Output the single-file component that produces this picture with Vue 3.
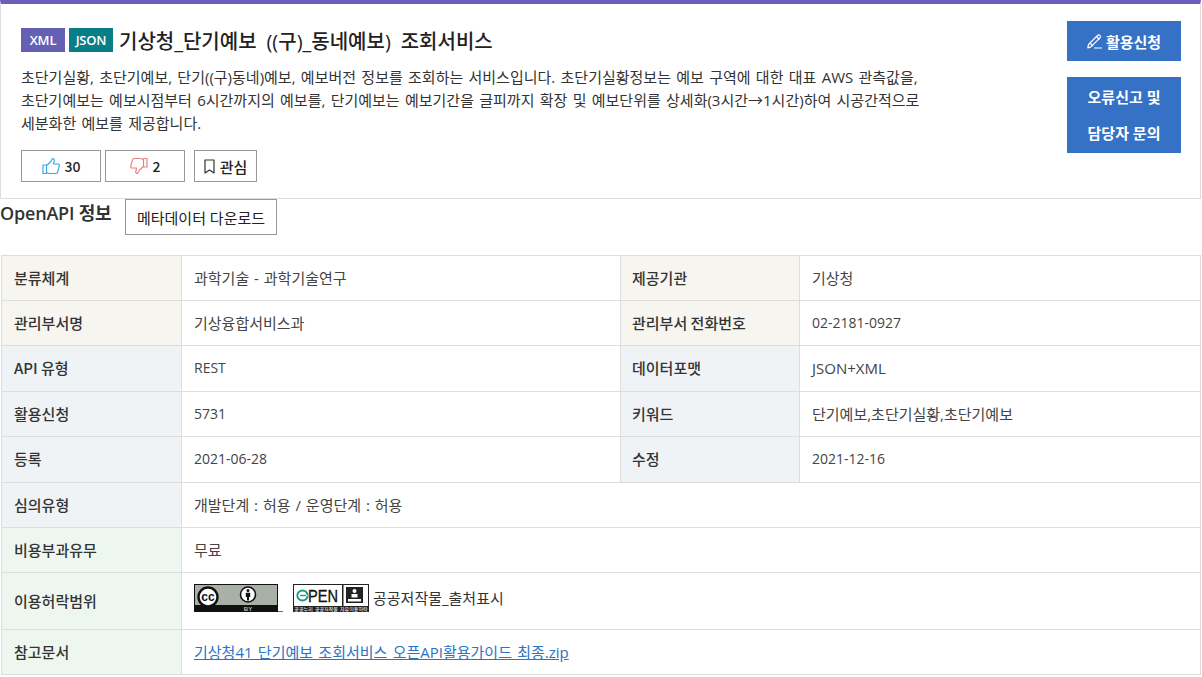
<script setup>
const rows = [
  { tone: 'beige', h: 45, cells: [['분류체계', '과학기술 - 과학기술연구'], ['제공기관', '기상청']] },
  { tone: 'beige', h: 45, cells: [['관리부서명', '기상융합서비스과'], ['관리부서 전화번호', '02-2181-0927', 'latin']] },
  { tone: 'blue', h: 46, cells: [['API 유형', 'REST', 'latin'], ['데이터포맷', 'JSON+XML']] },
  { tone: 'blue', h: 45, cells: [['활용신청', '5731', 'latin'], ['키워드', '단기예보,초단기실황,초단기예보']] },
  { tone: 'blue', h: 46, cells: [['등록', '2021-06-28', 'latin'], ['수정', '2021-12-16', 'latin']] }
]
</script>

<template>
  <div class="page">
    <section class="card">
      <div class="card-main">
        <h1 class="title">
          <span class="tag xml">XML</span>
          <span class="tag json">JSON</span>
          <span>기상청_단기예보 ((구)_동네예보) 조회서비스</span>
        </h1>
        <p class="desc">초단기실황, 초단기예보, 단기((구)동네)예보, 예보버전 정보를 조회하는 서비스입니다. 초단기실황정보는 예보 구역에 대한 대표 AWS 관측값을,<br>초단기예보는 예보시점부터 6시간까지의 예보를, 단기예보는 예보기간을 글피까지 확장 및 예보단위를 상세화(3시간→1시간)하여 시공간적으로<br>세분화한 예보를 제공합니다.</p>
        <div class="actions">
          <button class="act vote">
            <svg width="18" height="18" viewBox="0 0 18 18" fill="none" stroke="#3aa6e8" stroke-width="1.2" stroke-linejoin="round">
              <path d="M1 8h3.500v8.500H1zM4.500 8.500 8.500 5 10.500 1.500c1.400 0 2 1 1.700 2.400L11.400 7h4.700c1 0 1.500 1 1.200 1.800l-1.800 6.600c-.2.700-.7 1.100-1.400 1.100H7.500l-3-1"/>
            </svg>
            <span>30</span>
          </button>
          <button class="act vote">
            <svg width="18" height="18" viewBox="0 0 18 18" fill="none" stroke="#ee8080" stroke-width="1.2" stroke-linejoin="round">
              <path d="M17 10h-3.500V1.500H17zM13.500 9.500 9.500 13 7.500 16.500c-1.400 0-2-1-1.700-2.400L6.600 11H1.900C.9 11 .4 10 .7 9.200L2.500 2.600C2.700 1.900 3.200 1.500 3.900 1.500h6.600l3 1"/>
            </svg>
            <span>2</span>
          </button>
          <button class="act star">
            <svg width="11" height="15" viewBox="0 0 11 15" fill="none" stroke="#333" stroke-width="1.2" stroke-linejoin="round">
              <path d="M1 1h9v13L5.500 11 1 14z"/>
            </svg>
            <span>관심</span>
          </button>
        </div>
      </div>
      <div class="card-side">
        <a class="blue-btn apply">
          <svg width="16" height="16" viewBox="0 0 16 16" fill="none" stroke="#fff" stroke-width="1.2" stroke-linejoin="round">
            <path d="M1.500 11.500 10.500 2.500c.8-.8 1.800-.8 2.500-.1s.7 1.700-.1 2.500L3.900 13.900l-3.100.9zM9.500 3.500l3 3M3 10l3 3M7 15h8"/>
          </svg>
          <span>활용신청</span>
        </a>
        <a class="blue-btn report">오류신고 및<br>담당자 문의</a>
      </div>
    </section>

    <div class="sub">
      <h2 class="sub-title">OpenAPI 정보</h2>
      <button class="meta-btn">메타데이터 다운로드</button>
    </div>

    <table class="info">
      <colgroup>
        <col class="c1"><col class="c2"><col class="c3"><col>
      </colgroup>
      <tbody>
        <tr v-for="row in rows" :key="row.cells[0][0]" :class="row.tone" :style="{ height: row.h + 'px' }">
          <template v-for="cell in row.cells" :key="cell[0]">
            <th>{{ cell[0] }}</th>
            <td :class="cell[2]">{{ cell[1] }}</td>
          </template>
        </tr>
        <tr class="blue r45">
          <th>심의유형</th>
          <td colspan="3">개발단계 : 허용 / 운영단계 : 허용</td>
        </tr>
        <tr class="green r45">
          <th>비용부과유무</th>
          <td colspan="3">무료</td>
        </tr>
        <tr class="green r57">
          <th>이용허락범위</th>
          <td colspan="3">
            <div class="license">
              <svg class="cc" width="84" height="28" viewBox="0 0 84 28" role="img" aria-label="CC BY">
                <rect width="84" height="28" fill="#111"/>
                <rect x="1" y="1" width="82" height="20" fill="#a9b0a6"/>
                <circle cx="14" cy="13" r="9.500" fill="#fff" stroke="#111" stroke-width="2.400"/>
                <text x="14" y="16.800" text-anchor="middle" class="cc-t">cc</text>
                <circle cx="54" cy="10.500" r="7.500" fill="#fff" stroke="#111" stroke-width="1.600"/>
                <circle cx="54" cy="6.500" r="1.500" fill="#111"/>
                <path d="M51.800 8.800h4.400v4.200h-1.200v3.500h-2V13h-1.200z" fill="#111"/>
                <text x="54" y="26.500" text-anchor="middle" class="by-t">BY</text>
              </svg>
              <span class="under"></span>
              <svg class="open" width="76" height="28" viewBox="0 0 76 28" role="img" aria-label="공공누리 OPEN">
                <rect width="76" height="28" fill="#222"/>
                <rect x="1" y="1" width="48" height="21" fill="#fff"/>
                <rect x="50.500" y="1" width="24.500" height="21" fill="#fff"/>
                <circle cx="9.500" cy="11.500" r="5" fill="none" stroke="#149a8e" stroke-width="2.200"/>
                <path d="M5 11.500h9.500" stroke="#fff" stroke-width="1.500"/>
                <path d="M7 11.500h6" stroke="#149a8e" stroke-width="1.400"/>
                <text x="15" y="17.500" class="open-t" textLength="30" lengthAdjust="spacingAndGlyphs">PEN</text>
                <rect x="53" y="3" width="17" height="16" fill="#222"/>
                <circle cx="61.500" cy="7" r="2" fill="#fff"/>
                <path d="M58.500 13.500v-3.500h6v3.500z" fill="#fff"/>
                <rect x="55" y="15" width="13" height="2.500" fill="#fff"/>
                <text x="38" y="26.800" text-anchor="middle" class="nuri-t">공공누리 공공저작물 자유이용허락</text>
              </svg>
              <span class="lic-text">공공저작물_출처표시</span>
            </div>
          </td>
        </tr>
        <tr class="green r45">
          <th>참고문서</th>
          <td colspan="3"><a class="file">기상청41 단기예보 조회서비스 오픈API활용가이드 최종.zip</a></td>
        </tr>
      </tbody>
    </table>
  </div>
</template>

<style scoped>
.page {
  width: 1202px;
  height: 677px;
  overflow: hidden;
  background: #fff;
  color: #333;
  font-family: "Open Sans", "Noto Sans CJK KR", sans-serif;
  box-sizing: border-box;
  padding-right: 1px;
}
.card {
  box-sizing: border-box;
  height: 199px;
  border: 1px solid #ddd;
  border-top: 4px solid #6b5fbd;
  display: flex;
  justify-content: space-between;
  padding: 17px 19px 0 20px;
}
.card-main { padding-top: 7px; }
.title {
  margin: 0;
  display: flex;
  align-items: center;
  height: 24px;
  font-size: 20px;
  font-weight: 500;
  word-spacing: 4.700px;
  color: #222;
}
.tag {
  width: 44px;
  height: 24px;
  margin-right: 4px;
  display: flex;
  align-items: center;
  justify-content: center;
  color: #fff;
  font-size: 13px;
  font-weight: 600;
  letter-spacing: -0.2px;
}
.xml { background: #6660b4; }
.json { background: #0a7e86; margin-right: 6px; }
.desc {
  margin: 14px 0 0;
  font-size: 15px;
  line-height: 23px;
  word-spacing: 1.400px;
  white-space: nowrap;
  color: #333;
}
.actions {
  display: flex;
  margin-top: 15px;
  gap: 4px;
}
.act {
  box-sizing: border-box;
  height: 32px;
  background: #fff;
  border: 1px solid #999;
  display: flex;
  align-items: center;
  justify-content: center;
  gap: 5px;
  padding: 0;
  font: inherit;
  font-family: "Noto Sans CJK KR", sans-serif;
  font-weight: 500;
  font-size: 14px;
  color: #222;
}
.vote { width: 80px; }
.star { width: 63px; margin-left: 5px; font-size: 15px; }
.card-side {
  width: 114px;
  display: flex;
  flex-direction: column;
  gap: 16px;
}
.blue-btn {
  display: flex;
  align-items: center;
  justify-content: center;
  background: #3571c5;
  color: #fff;
  font-size: 15px;
  font-weight: 700;
  text-align: center;
}
.apply { height: 40px; gap: 3px; }
.report { height: 76px; line-height: 36px; }
.sub {
  display: flex;
  align-items: flex-start;
  height: 56px;
}
.sub-title {
  margin: 3px 14px 0 0;
  font-size: 18px;
  line-height: 22px;
  font-weight: 600;
  letter-spacing: -0.2px;
  width: 111px;
  white-space: nowrap;
  color: #333;
}
.meta-btn {
  box-sizing: border-box;
  width: 152px;
  height: 36px;
  background: #fff;
  border: 1px solid #999;
  font: inherit;
  font-size: 15px;
  color: #222;
  padding: 0;
}
.info {
  width: 1200px;
  margin-left: 1px;
  border-collapse: collapse;
  table-layout: fixed;
}
.c1 { width: 180px; }
.c2 { width: 439px; }
.c3 { width: 179px; }
.info th, .info td {
  border: 1px solid #ddd;
  padding: 0 0 2px 12px;
  text-align: left;
  font-size: 15px;
}
.info th {
  font-family: "Noto Sans CJK KR", sans-serif;
  font-weight: 500;
  color: #333;
}
.info th:nth-of-type(2) { padding-left: 11px; }
.info td { color: #444; word-spacing: 1px; }
.info td.latin { font-size: 14px; }
.beige th { background: #f6f5f0; }
.blue th { background: #eff3f6; }
.green th { background: #eef7ef; }
.r45 { height: 45px; }
.r57 { height: 57px; }
.license {
  display: flex;
  align-items: flex-start;
  margin-top: -5px;
}
.under {
  width: 5px;
  height: 1px;
  margin-top: 27px;
  background: #3571c5;
  margin-right: 10px;
}
.lic-text {
  margin-left: 4px;
  margin-top: 3px;
  color: #333;
}
.cc-t { font: 700 12px "Liberation Sans", sans-serif; fill: #111; }
.by-t { font: 700 6px "Liberation Sans", sans-serif; fill: #bbb; }
.open-t { font: 400 16px "Liberation Sans", sans-serif; fill: #111; stroke: #111; stroke-width: 0.3px; }
.nuri-t { font: 500 5px "Noto Sans CJK KR", sans-serif; fill: #ddd; }
.file {
  color: #2a73c5;
  text-decoration: underline;
  word-spacing: 1.400px;
}
</style>
